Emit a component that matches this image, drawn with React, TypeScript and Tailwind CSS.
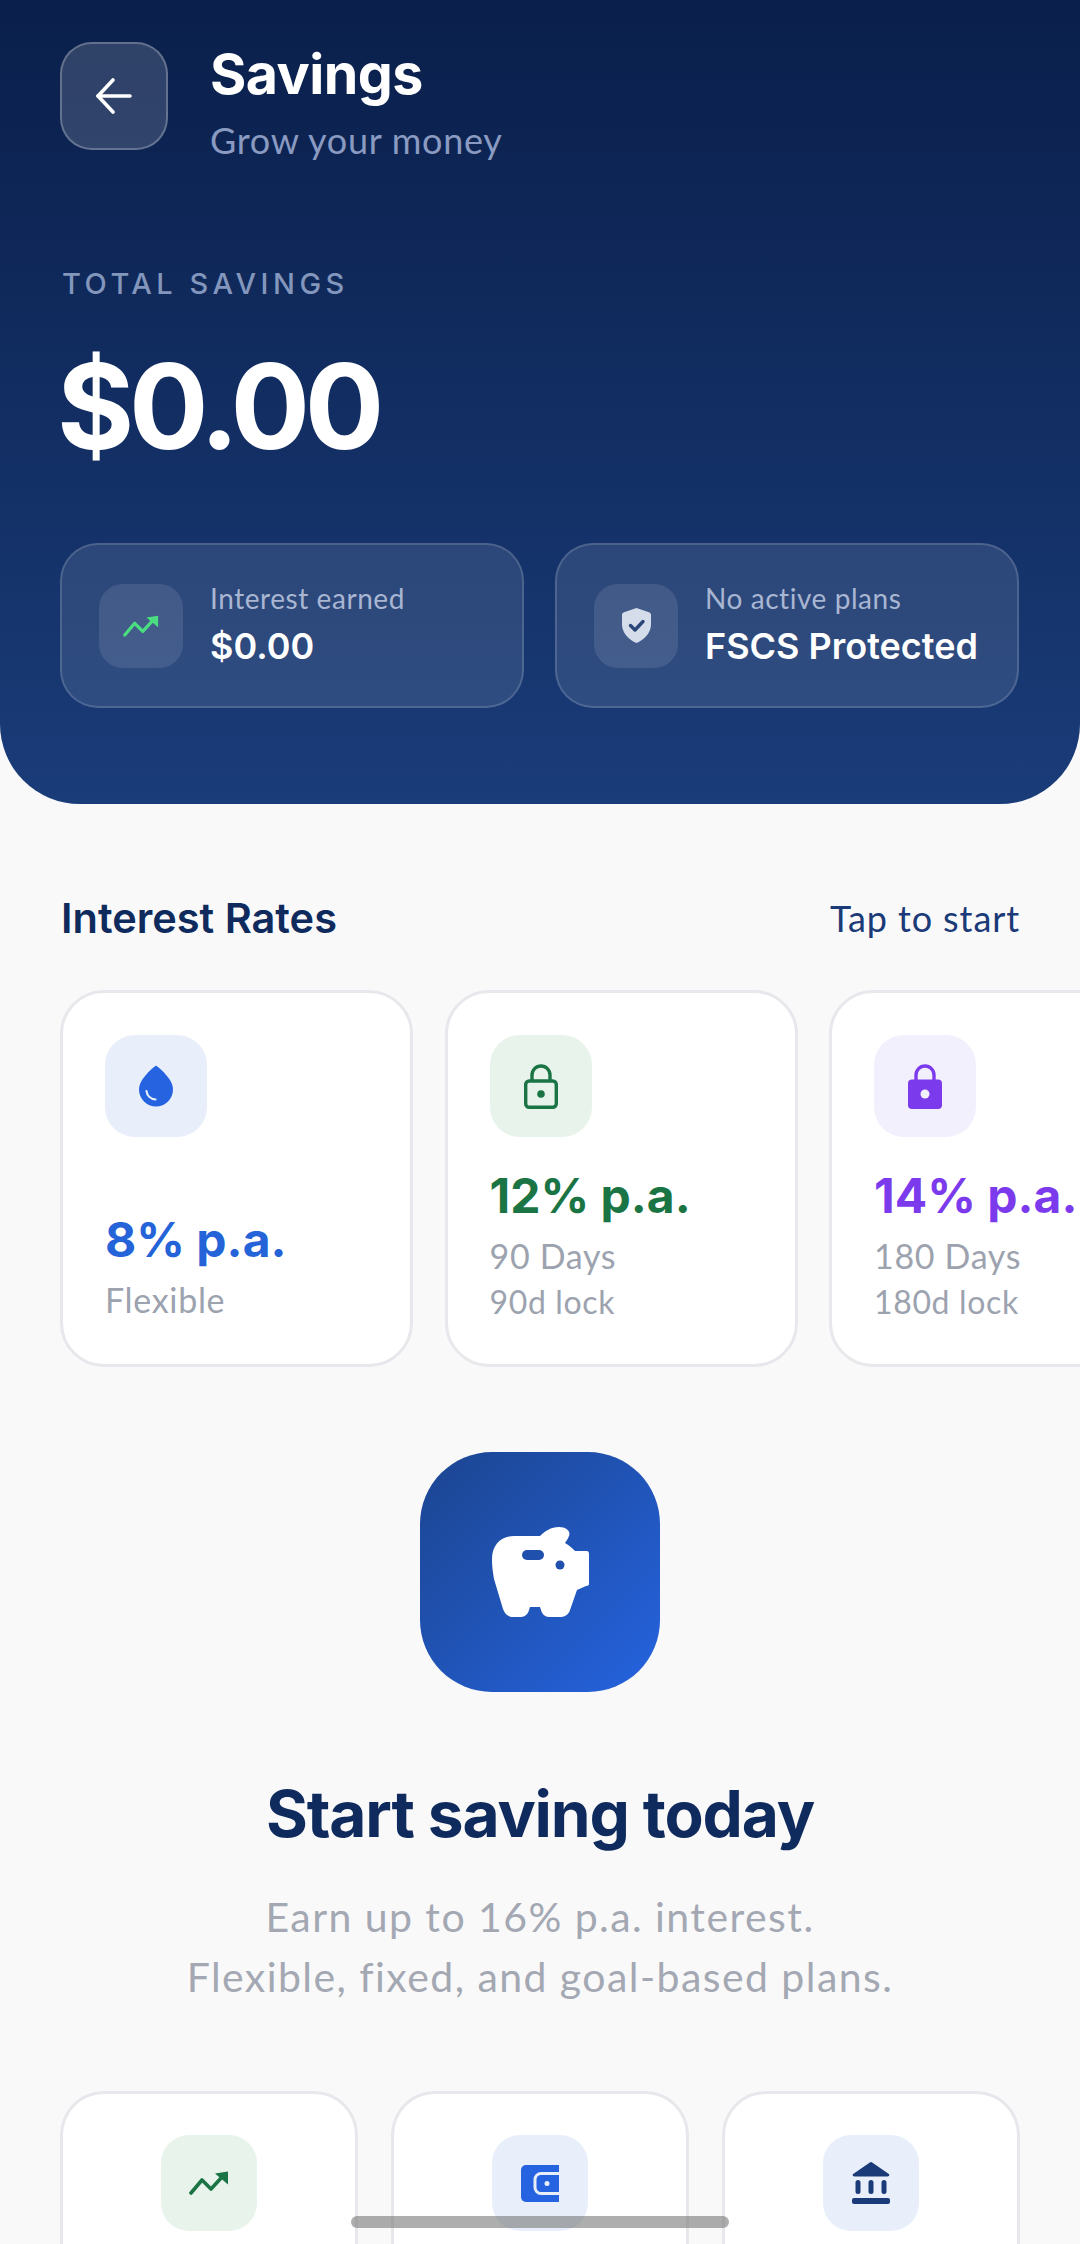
const heading = "font-['Inter',sans-serif]";
const body = "font-['Lato',sans-serif]";

function TrendIcon({ className }: { className: string }) {
  return (
    <svg viewBox="0 0 40 24" className={className} fill="none">
      <path d="M2 22 13 9l9 9L33 6" stroke="currentColor" strokeWidth="3.6" strokeLinecap="round" strokeLinejoin="round" />
      <path d="M26 2.5 39 0.5v13z" fill="currentColor" />
    </svg>
  );
}

function ShieldIcon() {
  return (
    <svg viewBox="0 0 29 35" className="h-[35px] w-[29px]">
      <path d="M14.5 0 27 4.2c1.2.4 2 1.5 2 2.8v9.5C29 25 22 31.8 14.5 35 7 31.8 0 25 0 16.5V7c0-1.3.8-2.4 2-2.8z" fill="#d5dcea" />
      <path d="m8.5 17.5 4.5 4.5 8-8.5" fill="none" stroke="#2b4678" strokeWidth="3.4" strokeLinecap="round" strokeLinejoin="round" />
    </svg>
  );
}

function DropIcon() {
  return (
    <svg viewBox="0 0 36 42" className="h-[42px] w-[36px]">
      <path d="M18 .5C20 2 35 13.500 35 24.500a17 17 0 0 1-34 0C1 13.500 16 2 18 .5z" fill="#2563e0" />
      <path d="M8.500 26c.5 4.500 4 8 9 8.500" fill="none" stroke="#e8effa" strokeWidth="2.2" strokeLinecap="round" />
    </svg>
  );
}

function LockOutlineIcon() {
  return (
    <svg viewBox="0 0 34 45" className="h-[45px] w-[34px]">
      <path d="M8 18v-7a9 9 0 0 1 18 0v7" fill="none" stroke="#1a7443" strokeWidth="3.4" />
      <rect x="1.700" y="17" width="30.600" height="26.300" rx="3.500" fill="none" stroke="#1a7443" strokeWidth="3.400" />
      <circle cx="17" cy="30" r="3.800" fill="#1a7443" />
    </svg>
  );
}

function LockSolidIcon() {
  return (
    <svg viewBox="0 0 34 45" className="h-[45px] w-[34px]">
      <path d="M8 18v-7a9 9 0 0 1 18 0v7" fill="none" stroke="#7c3aed" strokeWidth="3.4" />
      <rect y="15.500" width="34" height="29.500" rx="4" fill="#7c3aed" />
      <circle cx="17" cy="30" r="4.500" fill="#f3f0fe" />
    </svg>
  );
}

function PiggyIcon() {
  return (
    <svg viewBox="0 0 97 90" className="h-[90px] w-[97px]">
      <path
        d="M0 32C0 18 9 9 22 9h26C53 4 59 0 67 0c7 0 12 4 10 9-1 3-3 5-4 7 4 2 7 5 10 8h12c1 0 2 1 2 3v30c0 1-1 2-3 2l-9 4-7 20c-1 4-5 7-9 7H57c-4 0-7-3-8-7l-1-3H38l-1 3c-1 4-4 7-8 7h-8c-5 0-8-3-10-8L2 52C1 45 0 40 0 32z"
        fill="#ffffff"
      />
      <rect x="30" y="23" width="22" height="10" rx="5" fill="#1f50ae" />
      <circle cx="68" cy="38" r="4.500" fill="#1f50ae" />
    </svg>
  );
}

function WalletIcon() {
  return (
    <svg viewBox="0 0 38 37" className="h-[37px] w-[38px]">
      <path d="M5 0h33v37H5a5 5 0 0 1-5-5V5a5 5 0 0 1 5-5z" fill="#2563e0" />
      <path d="M38 8.500H20a6 6 0 0 0-6 6v8a6 6 0 0 0 6 6h18" fill="none" stroke="#e8effa" strokeWidth="3" />
      <circle cx="26" cy="18.500" r="2.500" fill="#e8effa" />
    </svg>
  );
}

function BankIcon() {
  return (
    <svg viewBox="0 0 38 42" className="h-[42px] w-[38px]" fill="#1a3a78">
      <path d="M17.500.8a2.200 2.200 0 0 1 3 0l16 11c1.500 1 .8 2.700-1 2.700H2.500c-1.800 0-2.500-1.700-1-2.700z" />
      <rect x="3.500" y="18" width="5" height="14" rx="2.500" />
      <rect x="16.500" y="18" width="5" height="14" rx="2.500" />
      <rect x="29.500" y="18" width="5" height="14" rx="2.500" />
      <rect y="36" width="38" height="6" rx="2" />
    </svg>
  );
}

function ArrowIcon() {
  return (
    <svg viewBox="0 0 36 36" className="h-[36px] w-[36px]" fill="none" stroke="#ffffff" strokeWidth="3.600" strokeLinecap="round" strokeLinejoin="round">
      <path d="M34 18H2" />
      <path d="M17 2 2 18l15 16" />
    </svg>
  );
}

function StatCard({ icon, label, value }: { icon: React.ReactNode; label: string; value: string }) {
  return (
    <div className="flex h-[165px] w-[464px] items-center gap-[27px] rounded-[38px] border-2 border-white/15 bg-white/10 pl-[37px]">
      <div className="flex h-[84px] w-[84px] items-center justify-center rounded-[24px] bg-white/10">{icon}</div>
      <div className="-mt-[4px] flex flex-col gap-[7px]">
        <span className={`${body} text-[28px] leading-[38px] tracking-[0.02em] text-[#a9b6d2]`}>{label}</span>
        <span className={`${heading} text-[36px] leading-[44px] font-semibold text-white`}>{value}</span>
      </div>
    </div>
  );
}

function RateCard({
  icon,
  tileClass,
  rate,
  rateClass,
  term,
  note,
}: {
  icon: React.ReactNode;
  tileClass: string;
  rate: string;
  rateClass: string;
  term: string;
  note?: string;
}) {
  return (
    <div className="flex h-[377px] w-[353px] shrink-0 flex-col justify-between rounded-[44px] border-[3px] border-[#e7e8ec] bg-white px-[42px] pt-[42px] pb-[42px]">
      <div className={`flex h-[102px] w-[102px] items-center justify-center rounded-[30px] ${tileClass}`}>{icon}</div>
      <div className="flex flex-col">
        <span className={`${heading} text-[48px] leading-[58px] font-bold whitespace-nowrap ${rateClass}`}>{rate}</span>
        <span className={`${body} mt-[9px] text-[34px] leading-[44px] tracking-[0.02em] text-[#9ca3af]`}>{term}</span>
        {note && <span className={`${body} mt-[4px] text-[32px] leading-[40px] tracking-[0.02em] text-[#9ca3af]`}>{note}</span>}
      </div>
    </div>
  );
}

function FeatureCard({ icon, tileClass }: { icon: React.ReactNode; tileClass: string }) {
  return (
    <div className="flex h-[200px] w-[298px] justify-center rounded-t-[44px] border-[3px] border-b-0 border-[#e7e8ec] bg-white pt-[41px]">
      <div className={`flex h-[96px] w-[96px] items-center justify-center rounded-[28px] ${tileClass}`}>{icon}</div>
    </div>
  );
}

export default function App() {
  return (
    <div className="relative h-[2244px] w-[1080px] overflow-hidden bg-[#f9f9fa]">
      <header className="h-[804px] rounded-b-[80px] bg-gradient-to-b from-[#0a1f4b] to-[#1a3c79] px-[60px] pt-[42px]">
        <div className="flex gap-[42px]">
          <button className="flex h-[108px] w-[108px] items-center justify-center rounded-[32px] border-2 border-white/25 bg-white/15">
            <ArrowIcon />
          </button>
          <div>
            <h1 className={`${heading} text-[55.5px] leading-[64px] font-bold tracking-[-0.01em] text-white`}>Savings</h1>
            <p className={`${body} mt-[11px] text-[36px] leading-[46px] tracking-[0.02em] text-[#8a9ac0]`}>Grow your money</p>
          </div>
        </div>
        <p className={`${heading} mt-[104px] ml-[2px] text-[29px] leading-[34px] font-medium tracking-[0.155em] text-[#8396bc]`}>TOTAL SAVINGS</p>
        <p className={`${heading} mt-[40px] -ml-[3px] text-[118px] leading-[130px] font-bold tracking-[-0.045em] text-white`}>$0.00</p>
        <div className="mt-[72px] flex gap-[31px]">
          <StatCard icon={<TrendIcon className="h-[22px] w-[36px] text-[#4ade80]" />} label="Interest earned" value="$0.00" />
          <StatCard icon={<ShieldIcon />} label="No active plans" value="FSCS Protected" />
        </div>
      </header>

      <section className="mt-[90px] pl-[60px]">
        <div className="flex items-center justify-between pr-[60px]">
          <h2 className={`${heading} ml-[1px] text-[41.5px] leading-[48px] font-semibold text-[#0f2a5c]`}>Interest Rates</h2>
          <span className={`${body} text-[36px] leading-[48px] tracking-[0.025em] text-[#1a3a78]`}>Tap to start</span>
        </div>
        <div className="mt-[48px] flex gap-[31.5px]">
          <RateCard icon={<DropIcon />} tileClass="bg-[#e8effa]" rate="8% p.a." rateClass="text-[#2563d8]" term="Flexible" />
          <RateCard icon={<LockOutlineIcon />} tileClass="bg-[#e8f3ec]" rate="12% p.a." rateClass="text-[#1a7443]" term="90 Days" note="90d lock" />
          <RateCard icon={<LockSolidIcon />} tileClass="bg-[#f3f0fe]" rate="14% p.a." rateClass="text-[#7c3aed]" term="180 Days" note="180d lock" />
        </div>
      </section>

      <section className="mt-[85px] flex flex-col items-center">
        <div className="flex h-[240px] w-[240px] items-center justify-center rounded-[72px] bg-gradient-to-br from-[#1c4590] to-[#2563e0]">
          <PiggyIcon />
        </div>
        <h2 className={`${heading} mt-[84px] text-[64px] leading-[76px] font-bold tracking-[-0.018em] text-[#0f2a5c]`}>Start saving today</h2>
        <p className={`${body} mt-[35px] text-center text-[41px] leading-[60px] tracking-[0.035em] text-[#a3a8b3]`}>
          Earn up to 16% p.a. interest.
          <br />
          Flexible, fixed, and goal-based plans.
        </p>
      </section>

      <div className="mt-[84px] flex justify-between px-[60px]">
        <FeatureCard icon={<TrendIcon className="h-[24px] w-[40px] text-[#1a7443]" />} tileClass="bg-[#e8f3ec]" />
        <FeatureCard icon={<WalletIcon />} tileClass="bg-[#e8effa]" />
        <FeatureCard icon={<BankIcon />} tileClass="bg-[#e8effa]" />
      </div>

      <div className="absolute top-[2216px] left-[351px] h-[12px] w-[378px] rounded-full bg-[#6b6b6b]/55" />
    </div>
  );
}
